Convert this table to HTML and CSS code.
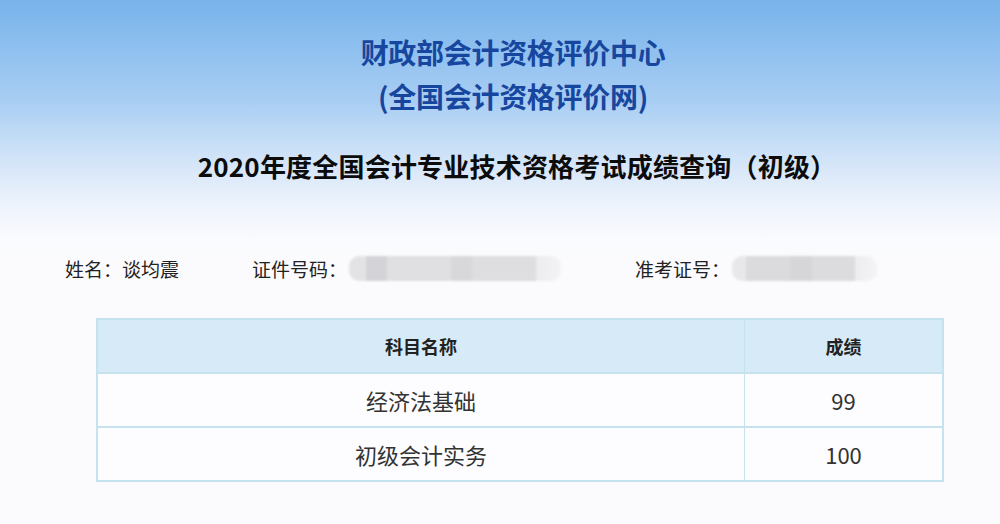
FILE: index.html
```html
<!DOCTYPE html>
<html lang="zh-CN">
<head>
<meta charset="utf-8">
<title>成绩查询</title>
<link rel="stylesheet" href="styles.css">
</head>
<body>
<div class="page">
  <header class="banner">
    <h1 class="org">
      <span class="org-line">财政部会计资格评价中心</span>
      <span class="org-line">(全国会计资格评价网)</span>
    </h1>
    <h2 class="title">2020年度全国会计专业技术资格考试成绩查询（初级）</h2>
  </header>

  <div class="info">
    <div class="field field-name">姓名：谈均震</div>
    <div class="field field-id">证件号码：<span class="mask mask-long"></span></div>
    <div class="field field-exam">准考证号：<span class="mask mask-short"></span></div>
  </div>

  <table class="scores">
    <thead>
      <tr><th class="col-subject">科目名称</th><th class="col-score">成绩</th></tr>
    </thead>
    <tbody>
      <tr><td>经济法基础</td><td>99</td></tr>
      <tr><td>初级会计实务</td><td>100</td></tr>
    </tbody>
  </table>
</div>
</body>
</html>
```

FILE: styles.css
```css
html, body {
  margin: 0;
  padding: 0;
}

body {
  background: #fbfbfd;
  font-family: "Noto Sans CJK SC", "Noto Sans", sans-serif;
  color: #222;
}

.page {
  width: 1000px;
  height: 524px;
  overflow: hidden;
  background-color: #fbfbfd;
  background-image: linear-gradient(to bottom,
    #78b3eb 0px,
    #8fc0ef 50px,
    #a8cdf3 100px,
    #c4ddf6 140px,
    #dce9f9 175px,
    #eef3fc 205px,
    #fafbfe 240px,
    #fbfbfd 260px);
  background-repeat: no-repeat;
  background-size: 100% 260px;
}

.banner {
  padding-top: 30px;
  text-align: center;
}

.org {
  margin: 0;
  padding-left: 26px;
  display: flex;
  flex-direction: column;
  align-items: center;
  font-size: 28px;
  line-height: 44px;
  font-weight: 700;
  color: #17469f;
  letter-spacing: -0.3px;
}

.org-line {
  display: block;
}

.title {
  margin: 30px 0 0;
  padding-left: 34px;
  font-size: 26px;
  line-height: 36px;
  font-weight: 700;
  color: #0c0c0c;
  letter-spacing: 0.2px;
}

.info {
  display: flex;
  align-items: center;
  margin-top: 70px;
  padding-left: 65px;
  height: 28px;
  font-size: 19px;
  color: #222;
}

.field {
  display: flex;
  align-items: center;
  white-space: nowrap;
}

.field-name {
  width: 187px;
}

.field-id {
  width: 383px;
}

.mask {
  display: inline-block;
  height: 25px;
  border-radius: 10px;
  margin-left: 2px;
  filter: blur(1px);
}

.mask-long {
  width: 212px;
  background: linear-gradient(to right,
    #e3e3e6 0, #e3e3e6 8%,
    #d4d4d8 8%, #d4d4d8 18%,
    #e0e0e3 18%, #e0e0e3 48%,
    #d8d8db 48%, #d8d8db 58%,
    #dedee1 58%, #dedee1 88%,
    #ececef 88%, #f3f3f5 100%);
}

.mask-short {
  width: 145px;
  background: linear-gradient(to right,
    #e8e8eb 0, #e8e8eb 10%,
    #dbdbde 10%, #dbdbde 40%,
    #d6d6d9 40%, #d6d6d9 55%,
    #dcdcdf 55%, #dcdcdf 85%,
    #ededf0 85%, #f4f4f6 100%);
}

.scores {
  margin: 36px 0 0 96px;
  width: 843px;
  border-collapse: collapse;
  table-layout: fixed;
  border: 2px solid #c6e2ef;
}

.scores th,
.scores td {
  height: 52px;
  padding: 0;
  text-align: center;
  border: 2px solid #c6e2ef;
  border-width: 2px 1px;
}

.scores th {
  background: #d6eaf7;
  font-size: 18px;
  font-weight: 700;
  color: #222;
}

.scores td {
  background: #fdfdff;
  font-size: 22px;
  font-weight: 400;
  color: #333;
}

.col-subject {
  width: 646px;
}

.col-score {
  width: 197px;
}
```
